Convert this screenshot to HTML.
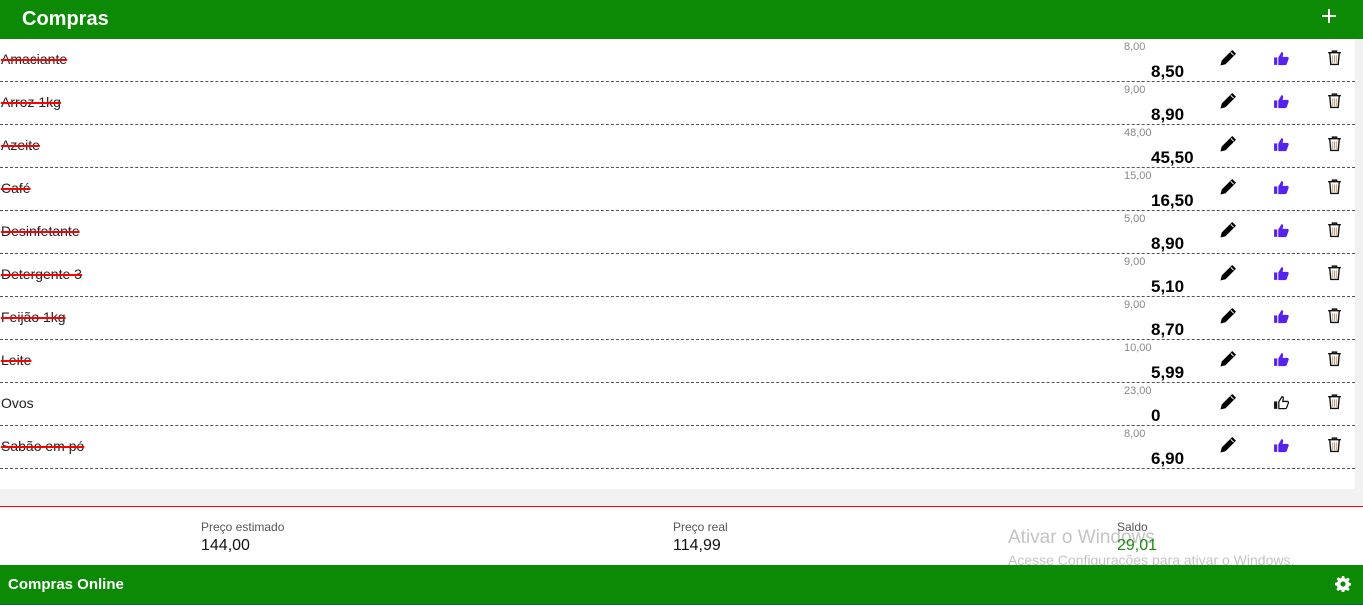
<!DOCTYPE html>
<html><head><meta charset="utf-8"><style>
*{margin:0;padding:0;box-sizing:border-box}
body{width:1363px;height:605px;overflow:hidden;font-family:"Liberation Sans",Arial,sans-serif;background:#fff;position:relative}
.hdr{position:absolute;left:0;top:0;width:1363px;height:39px;background:#0c8a06;color:#fff}
.hdr .t{position:absolute;left:22px;top:8px;font-size:20px;font-weight:bold}
.sb{position:absolute;left:1355px;top:39px;width:8px;height:450px;background:#f1f1f1}
.row{position:absolute;left:0;width:1355px;height:43px;border-bottom:1px dashed #555}
.nm{position:absolute;left:1px;top:12px;font-size:14px;color:#222}
.s{text-decoration:line-through;text-decoration-color:#f00;text-decoration-thickness:2px}
.sm{position:absolute;left:1124px;top:2px;font-size:11px;color:#888}
.bg{position:absolute;left:1151px;top:23px;font-size:17px;font-weight:bold;color:#000}
.pe{position:absolute;left:1220px;top:10px}
.th{position:absolute;left:1273px;top:11px}
.tr{position:absolute;left:1326px;top:10px}
.gray{position:absolute;left:0;top:489px;width:1363px;height:18px;background:#f2f2f2;border-bottom:1px solid #f00}
.lab{position:absolute;font-size:12px;color:#555;top:520px}
.val{position:absolute;font-size:16px;color:#111;top:537px}
.ftr{position:absolute;left:0;top:565px;width:1363px;height:40px;background:#0c8a06;color:#fff;border-bottom:1px solid #064}
.ftr .t{position:absolute;left:8px;top:11px;font-size:15px;font-weight:bold}
.wm{position:absolute;color:#c4c4c4}
</style></head><body>
<div class="hdr"><span class="t">Compras</span>
<svg style="position:absolute;left:1322px;top:9px" width="14" height="14" viewBox="0 0 14 14"><path d="M7 0v14M0 7h14" stroke="#fff" stroke-width="2"/></svg></div>
<div class="sb"></div>

<svg width="0" height="0" style="position:absolute"><defs>
<symbol id="pen" viewBox="0 0 16 16"><path d="M11.5 1.5l3 3L5 14l-4 1 1-4z" fill="#000" stroke="#000" stroke-width="0.8"/><path d="M10.2 3.2l2.6 2.6" stroke="#fff" stroke-width="0.9"/></symbol>
<symbol id="thf" viewBox="0 0 16 16"><rect x="1" y="7" width="3" height="7" fill="#5522ee"/><path d="M5 7l3-5c1.3 0 1.8 1 1.5 2.3L9 6.5h4.5c1 0 1.5 1 1.2 1.8l-1.8 5c-.3.6-.8.9-1.4.9H5z" fill="#5522ee"/></symbol>
<symbol id="tho" viewBox="0 0 16 16"><rect x="1" y="7" width="3" height="7" fill="#111"/><path d="M5.5 7.3l3-4.8c1 0 1.4.8 1.2 1.8L9.2 7h4.3c.8 0 1.2.7 1 1.3l-1.8 4.8c-.2.5-.6.7-1.1.7H5.5z" fill="none" stroke="#111" stroke-width="1.2"/></symbol>
<symbol id="trs" viewBox="0 0 16 16"><path d="M2 3.5h12M6 3.5V2h4v1.5M3.5 3.5l1 11h7l1-11" fill="none" stroke="#111" stroke-width="1.3"/><path d="M6.3 6v7M8 6v7M9.7 6v7" stroke="#b97" stroke-width="0.9"/></symbol>
</defs></svg>

<div class="row" style="top:39px"><span class="nm s">Amaciante</span><span class="sm">8,00</span><span class="bg">8,50</span><svg class="pe" width="17" height="17"><use href="#pen"/></svg><svg class="th" width="17" height="17"><use href="#thf"/></svg><svg class="tr" width="17" height="17"><use href="#trs"/></svg></div>
<div class="row" style="top:82px"><span class="nm s">Arroz 1kg</span><span class="sm">9,00</span><span class="bg">8,90</span><svg class="pe" width="17" height="17"><use href="#pen"/></svg><svg class="th" width="17" height="17"><use href="#thf"/></svg><svg class="tr" width="17" height="17"><use href="#trs"/></svg></div>
<div class="row" style="top:125px"><span class="nm s">Azeite</span><span class="sm">48,00</span><span class="bg">45,50</span><svg class="pe" width="17" height="17"><use href="#pen"/></svg><svg class="th" width="17" height="17"><use href="#thf"/></svg><svg class="tr" width="17" height="17"><use href="#trs"/></svg></div>
<div class="row" style="top:168px"><span class="nm s">Café</span><span class="sm">15,00</span><span class="bg">16,50</span><svg class="pe" width="17" height="17"><use href="#pen"/></svg><svg class="th" width="17" height="17"><use href="#thf"/></svg><svg class="tr" width="17" height="17"><use href="#trs"/></svg></div>
<div class="row" style="top:211px"><span class="nm s">Desinfetante</span><span class="sm">5,00</span><span class="bg">8,90</span><svg class="pe" width="17" height="17"><use href="#pen"/></svg><svg class="th" width="17" height="17"><use href="#thf"/></svg><svg class="tr" width="17" height="17"><use href="#trs"/></svg></div>
<div class="row" style="top:254px"><span class="nm s">Detergente 3</span><span class="sm">9,00</span><span class="bg">5,10</span><svg class="pe" width="17" height="17"><use href="#pen"/></svg><svg class="th" width="17" height="17"><use href="#thf"/></svg><svg class="tr" width="17" height="17"><use href="#trs"/></svg></div>
<div class="row" style="top:297px"><span class="nm s">Feijão 1kg</span><span class="sm">9,00</span><span class="bg">8,70</span><svg class="pe" width="17" height="17"><use href="#pen"/></svg><svg class="th" width="17" height="17"><use href="#thf"/></svg><svg class="tr" width="17" height="17"><use href="#trs"/></svg></div>
<div class="row" style="top:340px"><span class="nm s">Leite</span><span class="sm">10,00</span><span class="bg">5,99</span><svg class="pe" width="17" height="17"><use href="#pen"/></svg><svg class="th" width="17" height="17"><use href="#thf"/></svg><svg class="tr" width="17" height="17"><use href="#trs"/></svg></div>
<div class="row" style="top:383px"><span class="nm">Ovos</span><span class="sm">23,00</span><span class="bg">0</span><svg class="pe" width="17" height="17"><use href="#pen"/></svg><svg class="th" width="17" height="17"><use href="#tho"/></svg><svg class="tr" width="17" height="17"><use href="#trs"/></svg></div>
<div class="row" style="top:426px"><span class="nm s">Sabão em pó</span><span class="sm">8,00</span><span class="bg">6,90</span><svg class="pe" width="17" height="17"><use href="#pen"/></svg><svg class="th" width="17" height="17"><use href="#thf"/></svg><svg class="tr" width="17" height="17"><use href="#trs"/></svg></div>

<div class="gray"></div>
<span class="lab" style="left:201px">Preço estimado</span><span class="val" style="left:201px">144,00</span>
<span class="lab" style="left:673px">Preço real</span><span class="val" style="left:673px">114,99</span>
<span class="wm" style="left:1008px;top:527px;font-size:19px">Ativar o Windows</span>
<span class="wm" style="left:1008px;top:552px;font-size:14px">Acesse Configurações para ativar o Windows.</span>
<span class="lab" style="left:1117px">Saldo</span><span class="val" style="left:1117px;color:#1a8a10">29,01</span>

<div class="ftr"><span class="t">Compras Online</span>
<svg style="position:absolute;left:1335px;top:11px" width="16" height="16" viewBox="0 0 16 16"><path d="M6.8 0h2.4l.4 2.2 1.5.7 1.9-1.3 1.7 1.7-1.3 1.9.7 1.5 2.2.4v2.4l-2.2.4-.7 1.5 1.3 1.9-1.7 1.7-1.9-1.3-1.5.7-.4 2.2H6.8l-.4-2.2-1.5-.7-1.9 1.3-1.7-1.7 1.3-1.9-.7-1.5L0 9.2V6.8l2.2-.4.7-1.5-1.3-1.9 1.7-1.7 1.9 1.3 1.5-.7z" fill="#fff"/><circle cx="8" cy="8" r="2.6" fill="#0c8a06"/></svg>
</div>
</body></html>
